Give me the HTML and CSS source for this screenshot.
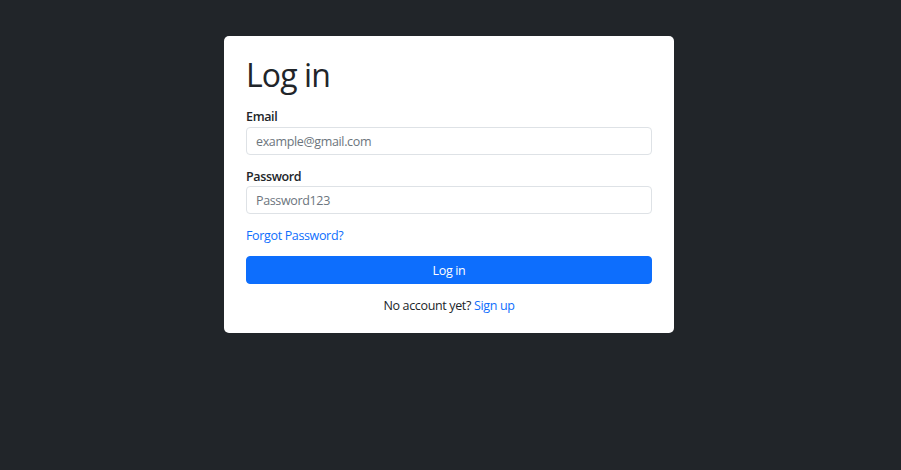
FILE: index.html
```html
<!DOCTYPE html>
<html lang="en">
<head>
<meta charset="utf-8">
<title>Log in</title>
<link rel="stylesheet" href="styles.css">
</head>
<body>
<main class="page">
  <form class="card">
    <h1 class="title">Log in</h1>
    <div class="field">
      <label class="label" for="email">Email</label>
      <input class="input" id="email" type="text" placeholder="example@gmail.com">
    </div>
    <div class="field">
      <label class="label" for="password">Password</label>
      <input class="input" id="password" type="text" placeholder="Password123">
    </div>
    <a class="link forgot" href="#">Forgot Password?</a>
    <button class="btn" type="button">Log in</button>
    <p class="signup">No account yet? <a class="link" href="#">Sign up</a></p>
  </form>
</main>
</body>
</html>
```
FILE: styles.css
```css
html, body {
  margin: 0;
  padding: 0;
}
body {
  background: #212529;
  color: #212529;
  font-family: "Open Sans", "Noto Sans", "Liberation Sans", sans-serif;
  font-size: 12.5px;
  letter-spacing: -0.35px;
  line-height: 18px;
}
.page {
  display: flex;
  justify-content: center;
  padding-top: 36px;
  padding-right: 3px;
}
.card {
  width: 450px;
  box-sizing: border-box;
  background: #fff;
  border-radius: 5px;
  padding: 20px 22px 18px;
  display: flex;
  flex-direction: column;
}
.title {
  margin: 0 0 13px;
  font-size: 32px;
  line-height: 38px;
  font-weight: 500;
  letter-spacing: -0.9px;
}
.field {
  display: flex;
  flex-direction: column;
  margin-bottom: 12px;
}
.label {
  font-weight: 600;
  padding-top: 1px;
  margin-bottom: 0;
}
.field:first-of-type .label {
  margin-bottom: 1px;
}
.input {
  box-sizing: border-box;
  height: 28px;
  border: 1px solid #dee2e6;
  border-radius: 4px;
  padding: 0 9px;
  font: inherit;
  letter-spacing: inherit;
  color: #212529;
  outline: none;
}
.input::placeholder {
  color: #6c757d;
  opacity: 1;
}
.link {
  color: #0d6efd;
  text-decoration: none;
}
.forgot {
  align-self: flex-start;
  padding-top: 1px;
}
.btn {
  margin-top: 11px;
  height: 28px;
  box-sizing: border-box;
  border: 1px solid #0d6efd;
  border-radius: 4px;
  background: #0d6efd;
  color: #fff;
  font: inherit;
  letter-spacing: inherit;
  padding: 2px 0 0;
}
.signup {
  margin: 12px 0 0;
  padding-top: 1px;
  text-align: center;
}
```
